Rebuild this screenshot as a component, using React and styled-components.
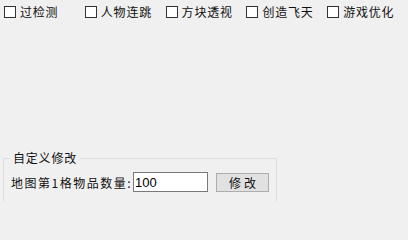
import React from 'react';
import styled, { createGlobalStyle } from 'styled-components';

const Global = createGlobalStyle`
  html, body {
    margin: 0;
    padding: 0;
    background: #f0f0f0;
    overflow: hidden;
  }
  body {
    font-family: "Noto Sans CJK SC", "Liberation Sans", sans-serif;
    font-size: 12px;
    color: #111;
  }
`;

const Page = styled.div`
  width: 408px;
  height: 201px;
  overflow: hidden;
`;

const CheckRow = styled.div`
  display: flex;
  padding: 4px 0 0 4px;
  height: 16px;
`;

const CheckItem = styled.label`
  display: flex;
  align-items: center;
  width: 82px;
  gap: 4px;
  letter-spacing: 0.8px;
  line-height: 14px;
  white-space: nowrap;
`;

const Box = styled.span`
  display: inline-block;
  width: 10px;
  height: 10px;
  border: 1px solid #333;
  background: #fff;
  flex: none;
`;

const GroupBox = styled.fieldset`
  margin: 131px 0 0 3px;
  padding: 0 7px;
  width: 274px;
  height: 90px;
  box-sizing: border-box;
  border: 1px solid #dcdcdc;
  border-radius: 2px;
  min-inline-size: 0;
`;

const Legend = styled.legend`
  margin-left: -1px;
  padding: 0 3px;
  line-height: 14px;
  letter-spacing: 0.8px;
`;

const FieldRow = styled.div`
  display: flex;
  align-items: center;
  margin-top: 7px;
`;

const FieldLabel = styled.span`
  letter-spacing: 1.5px;
  margin-right: 1px;
  white-space: nowrap;
`;

const NumberInput = styled.input`
  width: 75px;
  height: 20px;
  box-sizing: border-box;
  border: 1px solid #7a7a7a;
  background: #fff;
  padding: 0 1px;
  font-family: "Liberation Sans", sans-serif;
  font-size: 13px;
  color: #000;
  outline: none;
`;

const Button = styled.button`
  margin-left: 8px;
  width: 53px;
  height: 19px;
  box-sizing: border-box;
  border: 1px solid #adadad;
  background: #e1e1e1;
  font-family: "Noto Sans CJK SC", sans-serif;
  font-size: 12px;
  letter-spacing: 3px;
  text-indent: 3px;
  color: #111;
  padding: 0;
`;

const options = ['过检测', '人物连跳', '方块透视', '创造飞天', '游戏优化'];

export default function App() {
  return (
    <Page>
      <Global />
      <CheckRow>
        {options.map((name) => (
          <CheckItem key={name}>
            <Box />
            {name}
          </CheckItem>
        ))}
      </CheckRow>
      <GroupBox>
        <Legend>自定义修改</Legend>
        <FieldRow>
          <FieldLabel>地图第1格物品数量:</FieldLabel>
          <NumberInput defaultValue="100" />
          <Button>修改</Button>
        </FieldRow>
      </GroupBox>
    </Page>
  );
}
